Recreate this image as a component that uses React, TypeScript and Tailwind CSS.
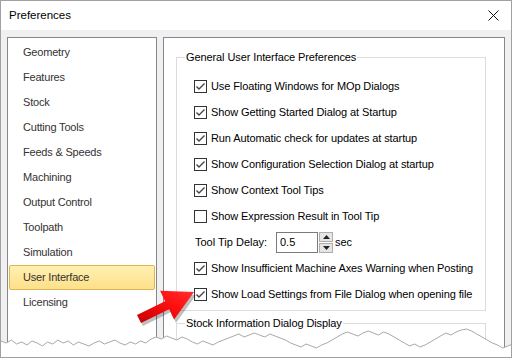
import React from "react";

const navItems = [
  "Geometry",
  "Features",
  "Stock",
  "Cutting Tools",
  "Feeds & Speeds",
  "Machining",
  "Output Control",
  "Toolpath",
  "Simulation",
  "User Interface",
  "Licensing",
];

const options: { label: string; checked: boolean }[] = [
  { label: "Use Floating Windows for MOp Dialogs", checked: true },
  { label: "Show Getting Started Dialog at Startup", checked: true },
  { label: "Run Automatic check for updates at startup", checked: true },
  { label: "Show Configuration Selection Dialog at startup", checked: true },
  { label: "Show Context Tool Tips", checked: true },
  { label: "Show Expression Result in Tool Tip", checked: false },
];

const tailOptions = [
  { label: "Show Insufficient Machine Axes Warning when Posting", checked: true },
  { label: "Show Load Settings from File Dialog when opening file", checked: true },
];

function CheckBox({ checked }: { checked: boolean }) {
  return (
    <span className="w-[13px] h-[13px] border border-[#333333] bg-white flex items-center justify-center shrink-0">
      {checked && (
        <svg width="11" height="11" viewBox="0 0 11 11">
          <polyline points="1.5,5.5 4,8 9.5,2.5" fill="none" stroke="#444" strokeWidth="1.4" />
        </svg>
      )}
    </span>
  );
}

function OptionRow({ label, checked }: { label: string; checked: boolean }) {
  return (
    <div className="h-[26px] flex items-center gap-[4px] pl-[17px]">
      <CheckBox checked={checked} />
      <span className="text-[11px] tracking-[-0.1px] text-black whitespace-nowrap">{label}</span>
    </div>
  );
}

// torn paper edge along the bottom
function TornEdge() {
  const ys = [
    340, 342, 339, 343, 341, 344, 340, 342, 345, 341, 343, 339, 342, 340, 344, 341, 343, 345, 342, 340,
    343, 341, 339, 342, 344, 341, 343, 340, 342, 338, 336, 338, 335, 337, 339, 336, 338, 341, 343, 340,
    342, 344, 341, 339, 337, 335, 333, 336, 334, 332, 334, 336, 333, 335, 337, 339, 342, 344, 346, 343,
    345, 347, 344, 342, 339, 336, 333, 331, 333, 335, 332, 330, 332, 334, 331, 333, 336, 339, 342, 345,
    343, 346, 344, 341, 338, 335, 332, 334, 331, 329, 328, 330, 333, 336, 339, 342, 344, 347, 345, 343,
  ];
  const step = 512 / (ys.length - 1);
  const pts = ys.map((y, i) => `${(i * step).toFixed(1)},${y}`).join(" ");
  return (
    <svg className="absolute left-0 top-0 pointer-events-none" width="512" height="358">
      <polygon points={`0,358 ${pts} 512,358`} fill="#ffffff" />
      <polyline points={pts} fill="none" stroke="#a8a8a8" strokeWidth="1" />
    </svg>
  );
}

function RedArrow() {
  return (
    <svg className="absolute left-0 top-0 pointer-events-none" width="512" height="358">
      <defs>
        <linearGradient id="arrowFill" x1="0" y1="1" x2="1" y2="0">
          <stop offset="0" stopColor="#c40000" />
          <stop offset="0.6" stopColor="#ff1010" />
          <stop offset="1" stopColor="#ff3030" />
        </linearGradient>
      </defs>
      <polygon
        points="142,325 170,311 175,322 195,294 161,293 166,303 138,317"
        fill="#000"
        opacity="0.25"
      />
      <polygon
        points="140,322 168.1,308.2 173.1,318.6 193,291 159.1,289.8 164.1,300.2 136,314"
        fill="url(#arrowFill)"
      />
    </svg>
  );
}

export default function App() {
  return (
    <div className="relative w-[512px] h-[358px] overflow-hidden bg-[#f0f0f0] border border-[#a0a0a0] font-[Liberation_Sans,Arial,sans-serif]">
      {/* title bar */}
      <div className="h-[29px] bg-white flex items-center justify-between pl-[8px] pr-[12px]">
        <span className="text-[11.5px] text-black">Preferences</span>
        <svg width="11" height="11" viewBox="0 0 11 11">
          <path d="M0.5 0.5 L10.5 10.5 M10.5 0.5 L0.5 10.5" stroke="#111" strokeWidth="1" />
        </svg>
      </div>

      <div className="flex gap-[6px] pt-[7px] pl-[6px]">
        {/* category list */}
        <div className="w-[150px] h-[320px] bg-white border border-[#828790] pt-[2px]">
          {navItems.map((name) => {
            const active = name === "User Interface";
            return (
              <div
                key={name}
                className={
                  active
                    ? "h-[25px] mx-[1px] flex items-center pl-[13px] rounded-[2px] border border-[#e0b450] bg-gradient-to-b from-[#fff0b0] to-[#fde08a]"
                    : "h-[25px] mx-[1px] flex items-center pl-[14px]"
                }
              >
                <span className="text-[11px] tracking-[-0.2px] text-[#333333]">{name}</span>
              </div>
            );
          })}
        </div>

        {/* settings panel */}
        <div className="w-[342px] h-[320px] bg-white border border-[#828790] pt-[12px] pl-[12px]">
          <fieldset className="w-[310px] border border-[#dcdcdc] pb-[3px]">
            <legend className="ml-[8px] px-[1px] text-[11px] tracking-[-0.1px] text-black leading-[14px]">
              General User Interface Preferences
            </legend>
            <div className="pt-[9px]">
              {options.map((o) => (
                <OptionRow key={o.label} label={o.label} checked={o.checked} />
              ))}
              <div className="h-[26px] flex items-center pl-[18px]">
                <span className="text-[11px] text-black w-[81px]">Tool Tip Delay:</span>
                <div className="w-[42px] h-[21px] border border-[#7a7a7a] bg-white flex items-center pl-[3px] text-[11px] text-black">
                  0.5
                </div>
                <div className="w-[14px] h-[21px] ml-[1px] flex flex-col gap-[1px]">
                  <div className="flex-1 bg-[#e5e5e5] border border-[#adadad] flex items-center justify-center">
                    <svg width="7" height="4" viewBox="0 0 7 4">
                      <polygon points="3.5,0 7,4 0,4" fill="#222" />
                    </svg>
                  </div>
                  <div className="flex-1 bg-[#e5e5e5] border border-[#adadad] flex items-center justify-center">
                    <svg width="7" height="4" viewBox="0 0 7 4">
                      <polygon points="0,0 7,0 3.5,4" fill="#222" />
                    </svg>
                  </div>
                </div>
                <span className="ml-[2px] text-[11px] text-black">sec</span>
              </div>
              {tailOptions.map((o) => (
                <OptionRow key={o.label} label={o.label} checked={o.checked} />
              ))}
            </div>
          </fieldset>

          <fieldset className="w-[310px] mt-[5px] border border-[#dcdcdc] h-[40px]">
            <legend className="ml-[8px] px-[1px] text-[11px] tracking-[-0.1px] text-black leading-[14px]">
              Stock Information Dialog Display
            </legend>
          </fieldset>
        </div>
      </div>

      <RedArrow />
      <TornEdge />
    </div>
  );
}
